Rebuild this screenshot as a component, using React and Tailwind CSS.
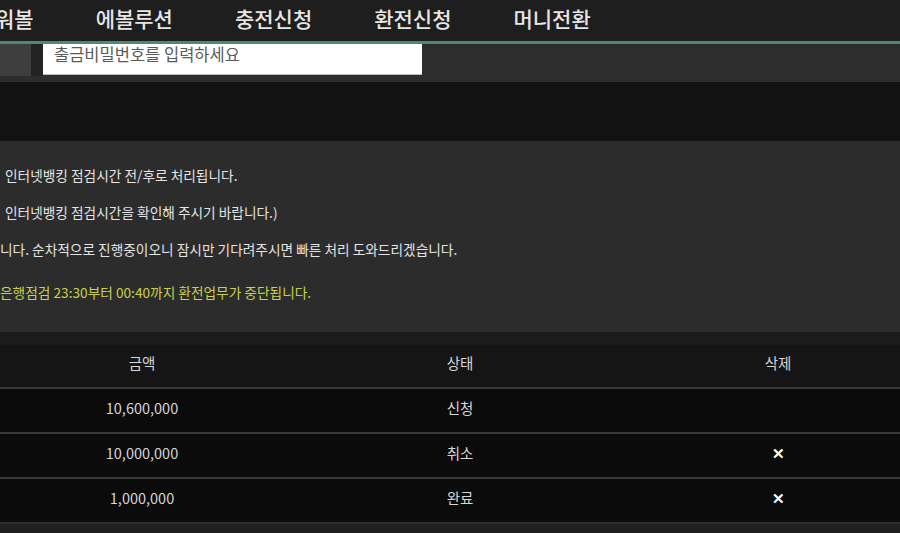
// Withdrawal request page (환전신청) – dark theme

const navItems = ['워볼', '에볼루션', '충전신청', '환전신청', '머니전환']

const notices = [
  { text: '인터넷뱅킹 점검시간 전/후로 처리됩니다.', tone: 'text-[#e4e4e4] pl-[5px]' },
  { text: '인터넷뱅킹 점검시간을 확인해 주시기 바랍니다.)', tone: 'text-[#e4e4e4] pl-[5px]' },
  { text: '니다. 순차적으로 진행중이오니 잠시만 기다려주시면 빠른 처리 도와드리겠습니다.', tone: 'text-[#e4e4e4]' },
  { text: '은행점검 23:30부터 00:40까지 환전업무가 중단됩니다.', tone: 'text-[#c9d24a]' },
]

const rows = [
  { amount: '10,600,000', status: '신청', del: false },
  { amount: '10,000,000', status: '취소', del: true },
  { amount: '1,000,000', status: '완료', del: true },
]

const font = { fontFamily: '"Noto Sans CJK KR", "Noto Sans", sans-serif' }

export default function App() {
  return (
    <div className="w-[900px] h-[533px] overflow-hidden bg-[#121212]" style={font}>
      {/* Top nav */}
      <div className="h-[41px] bg-[#1e1e1e] flex items-center">
        <div className="flex items-center ml-[-5px] gap-[62px] text-[21px] font-medium text-[#e6e6e6] leading-none pb-[4px]">
          {navItems.map((item) => (
            <span key={item}>{item}</span>
          ))}
        </div>
      </div>
      <div className="h-[3px] bg-[#4c8a74]" />

      {/* Password row */}
      <div className="h-[38px] bg-[#2d2d2d] flex">
        <div className="w-[31px] bg-[#3e3e3e] mb-[6px]" />
        <div className="w-[12px] bg-[#232323] mb-[6px]" />
        <div className="w-[379px] h-[31px] bg-white flex items-start px-[11px] text-[16.5px] leading-[20px] text-[#5a5a5a] border-b border-[#bdbdbd]">
          출금비밀번호를 입력하세요
        </div>
      </div>

      <div className="h-[59px] bg-[#121212]" />

      {/* Notice box */}
      <div className="h-[191px] bg-[#2c2c2c] flex flex-col pt-[25px] text-[13.7px] leading-[18px]">
        {notices.map((n, i) => (
          <p
            key={i}
            className={`${n.tone} ${i === 3 ? 'mt-[25px]' : i === 0 ? '' : 'mt-[19px]'} whitespace-nowrap`}
          >
            {n.text}
          </p>
        ))}
      </div>

      <div className="h-[13px] bg-[#1b1b1b]" />

      {/* Table */}
      <div className="w-[954px] ml-[-17px] text-[14.5px] text-[#d6d6d6]">
        <div className="grid grid-cols-3 h-[42px] bg-[#151515] items-center text-center pb-[6px]">
          <span>금액</span>
          <span>상태</span>
          <span>삭제</span>
        </div>
        {rows.map((r) => (
          <div key={r.amount} className="border-t-[2px] border-[#3a3a3a]">
            <div className="grid grid-cols-3 h-[43px] bg-[#0b0b0b] items-center text-center pb-[5px]">
              <span>{r.amount}</span>
              <span>{r.status}</span>
              <span className="text-white font-bold text-[15px]">{r.del ? '✕' : ''}</span>
            </div>
          </div>
        ))}
        <div className="border-t-[2px] border-[#2e2e2e] h-[20px] bg-[#1f1f1f]" />
      </div>
    </div>
  )
}
